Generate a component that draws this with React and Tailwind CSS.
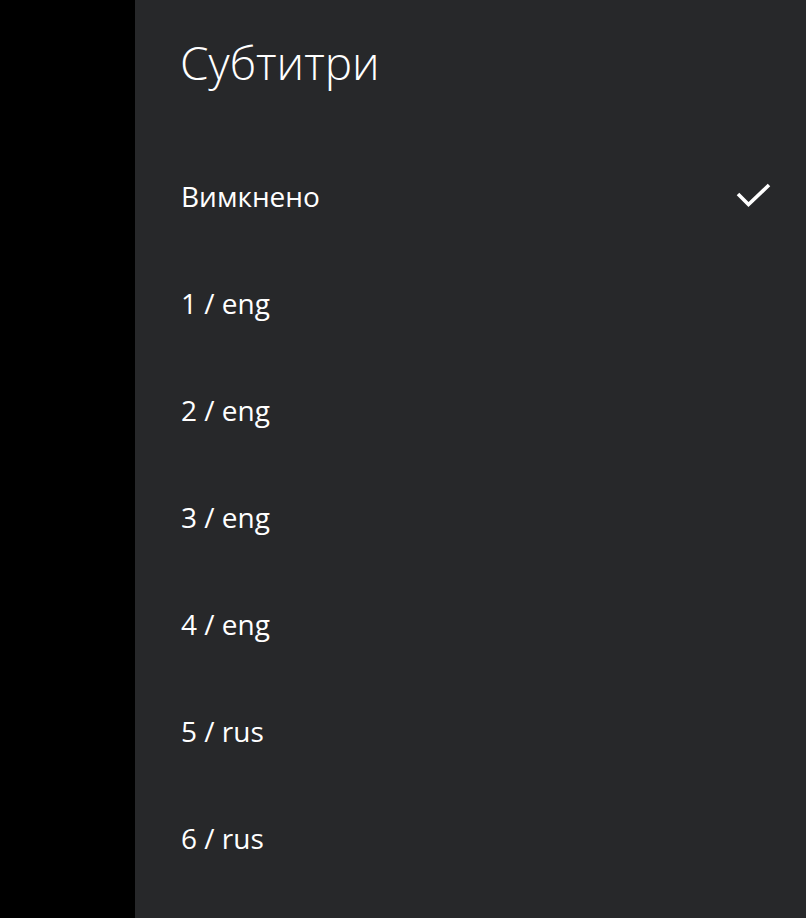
const items = ["Вимкнено", "1 / eng", "2 / eng", "3 / eng", "4 / eng", "5 / rus", "6 / rus"];

const Check = () => (
  <svg width="36" height="26" viewBox="0 0 36 26" fill="none">
    <path d="M2 11 L12.5 21.5 L33 2" stroke="#ffffff" strokeWidth="3.6" strokeLinecap="butt" strokeLinejoin="miter" />
  </svg>
);

export default function App() {
  const selected = 0;
  return (
    <div className="flex h-[918px] w-full bg-black" style={{ fontFamily: '"Open Sans", "Noto Sans", sans-serif' }}>
      <div className="w-[135px] shrink-0 bg-black" />
      <div className="flex-1 bg-[#27282a] text-white">
        <h1 className="pl-[45px] pt-[28px] text-[46px] font-light leading-[68px]">Субтитри</h1>
        <ul className="mt-[46px]">
          {items.map((label, i) => (
            <li key={label} className="flex h-[107px] items-center justify-between pl-[46px] pr-[34px]">
              <span className="text-[28px] leading-none">{label}</span>
              {i === selected ? <Check /> : null}
            </li>
          ))}
        </ul>
      </div>
    </div>
  );
}
